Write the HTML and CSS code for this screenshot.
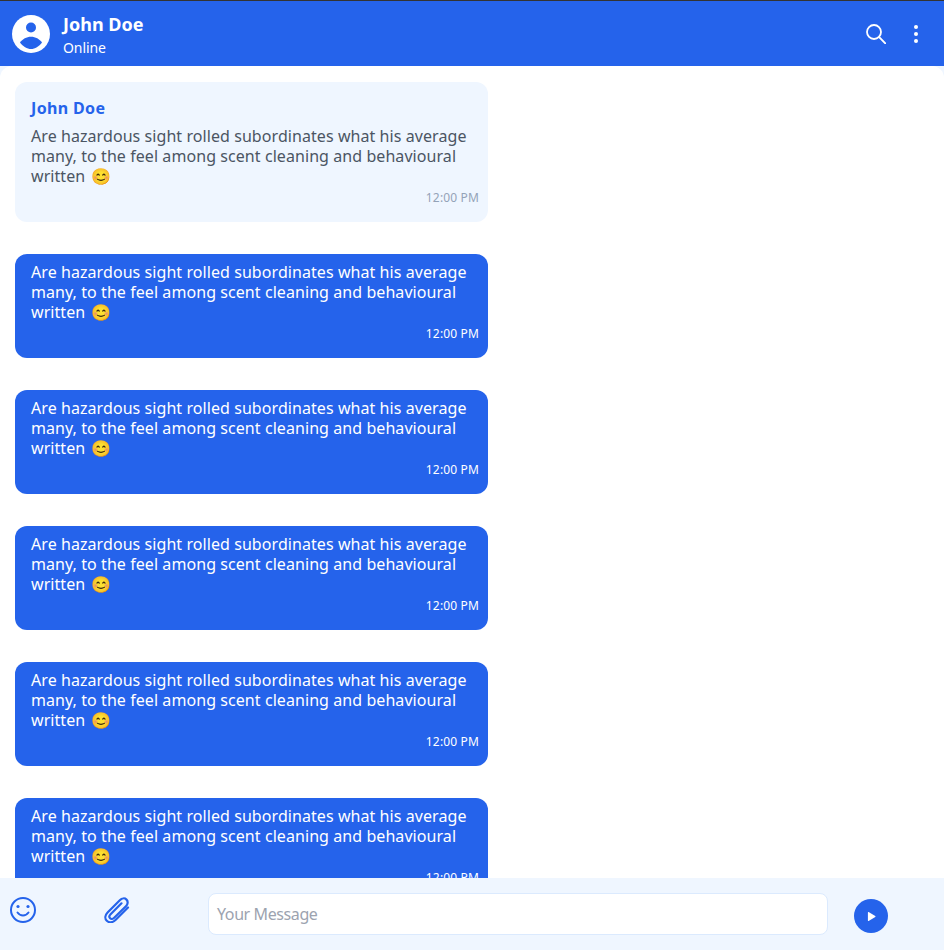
FILE: index.html
```html
<!DOCTYPE html>
<html lang="en">
<head>
  <meta charset="UTF-8" />
  <meta name="viewport" content="width=device-width, initial-scale=1.0" />
  <title>Chat</title>
  <link rel="stylesheet" href="styles.css">
</head>
<body>
  <div class="chat">
    <header class="chat-header">
      <svg class="avatar" viewBox="0 0 38 38">
        <circle cx="19" cy="19" r="19" fill="#fff"/>
        <circle cx="19" cy="12.500" r="5" fill="#2563eb"/>
        <path d="M8 27.500C10.500 24 14.500 21.700 19 21.700S27.500 24 30 27.500C27 31.500 23 34 19 34S11 31.500 8 27.500z" fill="#2563eb"/>
      </svg>
      <div class="contact">
        <div class="contact-name">John Doe</div>
        <div class="contact-status">Online</div>
      </div>
      <div class="header-actions">
        <svg class="icon-search" viewBox="0 0 20 20">
          <circle cx="8" cy="8" r="7" fill="none" stroke="#fff" stroke-width="1.800"/>
          <path d="M13.200 13.200L19.300 19.300" stroke="#fff" stroke-width="1.900" stroke-linecap="round"/>
        </svg>
        <svg class="icon-more" viewBox="0 0 4 18">
          <circle cx="2" cy="2" r="2" fill="#fff"/>
          <circle cx="2" cy="9" r="2" fill="#fff"/>
          <circle cx="2" cy="16" r="2" fill="#fff"/>
        </svg>
      </div>
    </header>

    <main class="messages">
      <div class="msg msg-in">
        <div class="msg-name">John Doe</div>
        <div class="msg-text">Are hazardous sight rolled subordinates what his average many, to the feel among scent cleaning and behavioural written<span class="emoji">😊</span></div>
        <div class="msg-time">12:00 PM</div>
      </div>
      <div class="msg msg-out">
        <div class="msg-text">Are hazardous sight rolled subordinates what his average many, to the feel among scent cleaning and behavioural written<span class="emoji">😊</span></div>
        <div class="msg-time">12:00 PM</div>
      </div>
      <div class="msg msg-out">
        <div class="msg-text">Are hazardous sight rolled subordinates what his average many, to the feel among scent cleaning and behavioural written<span class="emoji">😊</span></div>
        <div class="msg-time">12:00 PM</div>
      </div>
      <div class="msg msg-out">
        <div class="msg-text">Are hazardous sight rolled subordinates what his average many, to the feel among scent cleaning and behavioural written<span class="emoji">😊</span></div>
        <div class="msg-time">12:00 PM</div>
      </div>
      <div class="msg msg-out">
        <div class="msg-text">Are hazardous sight rolled subordinates what his average many, to the feel among scent cleaning and behavioural written<span class="emoji">😊</span></div>
        <div class="msg-time">12:00 PM</div>
      </div>
      <div class="msg msg-out">
        <div class="msg-text">Are hazardous sight rolled subordinates what his average many, to the feel among scent cleaning and behavioural written<span class="emoji">😊</span></div>
        <div class="msg-time">12:00 PM</div>
      </div>
    </main>

    <footer class="chat-input">
      <svg class="icon-smile" viewBox="0 0 28 28">
        <circle cx="14" cy="14" r="12" fill="none" stroke="#2563eb" stroke-width="2"/>
        <circle cx="9" cy="10.500" r="1.600" fill="#2563eb"/>
        <circle cx="19" cy="10.500" r="1.600" fill="#2563eb"/>
        <path d="M8.500 16.500c1.500 2 3.300 3 5.500 3s4-1 5.500-3" fill="none" stroke="#2563eb" stroke-width="2" stroke-linecap="round"/>
      </svg>
      <svg class="icon-clip" viewBox="0 0 26 26">
        <path d="M24 10.500L11.500 23c-2.800 2.800-6.500 3-8.700 .8S1 18 3.800 15.200L15.800 3.200c2.100-2.100 5-2.300 6.700-.6s1.500 4.600-.6 6.700L10.200 20.800c-1.300 1.300-3.100 1.500-4.100 .5s-.8-2.800 .5-4.100L17.500 6.300" fill="none" stroke="#2563eb" stroke-width="2.200" stroke-linecap="round" stroke-linejoin="round"/>
      </svg>
      <div class="msg-box">Your Message</div>
      <div class="send-btn">
        <svg viewBox="0 0 10 12"><path d="M1 1.500v9c0 .5 .4 .7 .8 .5l7.400-4.500c.4-.2 .4-.8 0-1L1.800 1c-.4-.2-.8 0-.8 .5z" fill="#fff"/></svg>
      </div>
    </footer>
  </div>
</body>
</html>
```
FILE: styles.css
```css
* {
  box-sizing: border-box;
}

html, body {
  height: 100%;
}

body {
  margin: 0;
  background: #fff;
  font-family: 'Noto Sans', sans-serif;
  overflow: hidden;
}

.chat {
  width: 944px;
  height: 950px;
  display: flex;
  flex-direction: column;
  background: #eff6ff;
}

.chat-header {
  height: 66px;
  flex: none;
  display: flex;
  align-items: center;
  padding: 0 26px 0 12px;
  background: #2563eb;
  border-top: 1px solid #333;
  color: #fff;
}

.avatar {
  width: 38px;
  height: 38px;
}

.contact {
  margin-left: 13px;
  padding-top: 2px;
}

.contact-name {
  font-size: 18px;
  font-weight: 700;
  line-height: 24px;
}

.contact-status {
  font-size: 14px;
  letter-spacing: -0.1px;
  line-height: 20px;
  margin-top: 2px;
}

.header-actions {
  margin-left: auto;
  display: flex;
  align-items: center;
  gap: 28px;
}

.icon-search {
  width: 20px;
  height: 20px;
}

.icon-more {
  width: 4px;
  height: 18px;
}

.messages {
  flex: 1;
  min-height: 0;
  overflow: hidden;
  background: #fff;
  border-radius: 12px 12px 0 0;
  padding: 16px 15px;
}

.msg {
  width: 473px;
  border-radius: 12px;
  padding: 8px 9px 16px 16px;
  margin-bottom: 32px;
  font-size: 16px;
  line-height: 20px;
  letter-spacing: 0.07px;
}

.msg-in {
  background: #eff6ff;
  color: #4b5563;
  padding-top: 16px;
}

.msg-out {
  background: #2563eb;
  color: #fff;
}

.msg-name {
  color: #2563eb;
  font-weight: 700;
  letter-spacing: 0.35px;
  line-height: 20px;
  margin-bottom: 8px;
}

.emoji {
  display: inline-block;
  height: 20px;
  margin-left: 6px;
}

.msg-time {
  font-size: 12px;
  letter-spacing: 0.15px;
  line-height: 16px;
  text-align: right;
  margin-top: 4px;
}

.msg-in .msg-time {
  color: #94a3b8;
}

.chat-input {
  height: 72px;
  flex: none;
  display: flex;
  align-items: flex-start;
}

.icon-smile {
  width: 28px;
  height: 28px;
  margin: 18px 0 0 9px;
}

.icon-clip {
  width: 26px;
  height: 26px;
  margin: 19px 0 0 67px;
}

.msg-box {
  width: 620px;
  height: 42px;
  margin: 15px 0 0 78px;
  padding: 0 8px;
  background: #fff;
  border: 1px solid #dbeafe;
  border-radius: 8px;
  color: #9ca3af;
  font-size: 16px;
  letter-spacing: -0.4px;
  line-height: 40px;
}

.send-btn {
  width: 34px;
  height: 34px;
  margin: 21px 0 0 26px;
  border-radius: 50%;
  background: #2563eb;
  display: flex;
  align-items: center;
  justify-content: center;
}

.send-btn svg {
  width: 9px;
  height: 11px;
}
```
